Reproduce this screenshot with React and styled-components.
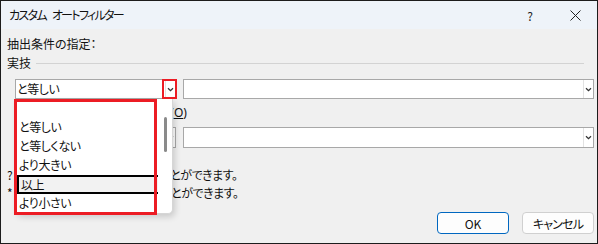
import React from "react";
import styled, { createGlobalStyle } from "styled-components";

const Global = createGlobalStyle`
  html, body { margin: 0; padding: 0; background: #ffffff; }
  body { font-family: "Noto Sans CJK JP", "Noto Sans", sans-serif; font-feature-settings: "palt"; }
`;

const Window = styled.div`
  position: relative;
  box-sizing: border-box;
  width: 598px;
  height: 244px;
  border: 1px solid #1c1c1c;
  display: flex;
  flex-direction: column;
  font-size: 12px;
  color: #111;
  overflow: hidden;
`;

const TitleBar = styled.div`
  height: 28px;
  flex: none;
  background: #eef3f9;
  display: flex;
  align-items: center;
  padding-left: 8px;
`;

const Title = styled.div`
  flex: 1;
  font-size: 12px;
  line-height: 28px;
  letter-spacing: -1.7px;
  word-spacing: 5px;
  white-space: pre;
`;

const TitleButton = styled.div`
  width: ${(p) => p.$w}px;
  height: 28px;
  display: flex;
  align-items: center;
  justify-content: center;
  font-size: 12px;
  color: #222;
`;

const Body = styled.div`
  flex: 1;
  background: #f0f0f0;
  display: flex;
  flex-direction: column;
  padding: 0 3px 0 6px;
`;

const Line = styled.div`
  line-height: 18px;
  height: 18px;
  margin-top: ${(p) => p.$mt || 0}px;
  white-space: nowrap;
  letter-spacing: ${(p) => p.$ls || 0}px;
`;

const GroupHeader = styled.div`
  display: flex;
  align-items: center;
  margin-top: 1px;
  margin-right: 10px;
  height: 18px;
  line-height: 18px;
`;

const Rule = styled.div`
  flex: 1;
  height: 1px;
  background: #d3d3d3;
  margin-left: 5px;
`;

const ComboRow = styled.div`
  display: flex;
  gap: 7px;
  margin-left: 8px;
  margin-top: ${(p) => p.$mt}px;
  height: ${(p) => p.$h}px;
`;

const Combo = styled.div`
  box-sizing: border-box;
  width: ${(p) => (p.$w ? `${p.$w}px` : "auto")};
  flex: ${(p) => (p.$w ? "none" : "1")};
  height: 100%;
  border: 1px solid #a8a8a8;
  background: #fff;
  display: flex;
  align-items: center;
`;

const ComboText = styled.div`
  flex: 1;
  padding-left: 1px;
  line-height: 16px;
  white-space: nowrap;
  letter-spacing: -0.4px;
`;

const ComboArrow = styled.div`
  width: 9px;
  height: 100%;
  border-left: 1px solid #e2e2e2;
  display: flex;
  align-items: center;
  justify-content: center;
`;

const RadioRow = styled.div`
  display: flex;
  align-items: center;
  gap: 47px;
  height: 18px;
  margin-top: 5px;
  padding-left: 25px;
`;

const Radio = styled.label`
  display: flex;
  align-items: center;
  gap: 4px;
  line-height: 18px;
  white-space: nowrap;
`;

const RadioText = styled.span`
  font-family: "Noto Sans", "Noto Sans CJK JP", sans-serif;
  font-feature-settings: normal;
`;

const Dot = styled.span`
  box-sizing: border-box;
  width: 13px;
  height: 13px;
  border-radius: 50%;
  border: 1px solid ${(p) => (p.$on ? "#0067c0" : "#555")};
  background: ${(p) => (p.$on ? "radial-gradient(circle, #fff 0 2.5px, #0067c0 3px)" : "#fff")};
`;

const U = styled.span`
  text-decoration: underline;
`;

const ButtonRow = styled.div`
  display: flex;
  justify-content: flex-end;
  gap: 13px;
  margin-top: 10px;
`;

const Button = styled.button`
  box-sizing: border-box;
  width: 72px;
  height: 22px;
  border-radius: 4px;
  border: 1px solid ${(p) => (p.$primary ? "#0067c0" : "#d0d0d0")};
  background: #fdfdfd;
  font-family: inherit;
  font-feature-settings: "palt";
  font-size: 12px;
  color: #111;
  padding: 0;
  letter-spacing: ${(p) => (p.$primary ? 0 : -0.8)}px;
`;

const Popup = styled.div`
  position: absolute;
  left: 14px;
  top: 98px;
  box-sizing: border-box;
  width: 158px;
  height: 115px;
  background: #fff;
  border: 1px solid #d6d6d6;
  border-top: none;
  border-radius: 0 0 5px 5px;
  box-shadow: 2px 3px 6px rgba(0, 0, 0, 0.16);
`;

const Item = styled.div`
  box-sizing: border-box;
  height: 19px;
  line-height: 17px;
  padding-left: 3px;
  white-space: nowrap;
  letter-spacing: -0.4px;
  ${(p) =>
    p.$hot &&
    `
    width: 141px;
    margin-left: 1px;
    padding-left: 2px;
    background: #f2f2f2;
    border: 2px solid #000;
    border-right: none;
    line-height: 15px;
  `}
`;

const Thumb = styled.div`
  position: absolute;
  left: 148px;
  top: 18px;
  width: 3px;
  height: 35px;
  border-radius: 2px;
  background: #8a8a8a;
`;

const RedBox = styled.div`
  position: absolute;
  box-sizing: border-box;
  left: ${(p) => p.$x}px;
  top: ${(p) => p.$y}px;
  width: ${(p) => p.$w}px;
  height: ${(p) => p.$h}px;
  border: ${(p) => p.$b}px solid #ec1c24;
`;

const Chevron = () => (
  <svg width="7" height="5" viewBox="0 0 7 5">
    <path d="M1 1.2 L3.5 3.6 L6 1.2" fill="none" stroke="#333" strokeWidth="1.3" />
  </svg>
);

const Close = () => (
  <svg width="11" height="11" viewBox="0 0 11 11">
    <path d="M0.5 0.5 L10.5 10.5 M10.5 0.5 L0.5 10.5" stroke="#222" strokeWidth="1" />
  </svg>
);

const items = ["", "と等しい", "と等しくない", "より大きい", "以上", "より小さい"];

export default function App() {
  return (
    <>
      <Global />
      <Window>
        <TitleBar>
          <Title>カスタム オートフィルター</Title>
          <TitleButton $w={46}>?</TitleButton>
          <TitleButton $w={44}>
            <Close />
          </TitleButton>
        </TitleBar>
        <Body>
          <Line $mt={6}>抽出条件の指定：</Line>
          <GroupHeader>
            実技
            <Rule />
          </GroupHeader>
          <ComboRow $mt={7} $h={20}>
            <Combo $w={161}>
              <ComboText>と等しい</ComboText>
              <ComboArrow>
                <Chevron />
              </ComboArrow>
            </Combo>
            <Combo>
              <ComboText />
              <ComboArrow>
                <Chevron />
              </ComboArrow>
            </Combo>
          </ComboRow>
          <RadioRow>
            <Radio>
              <Dot $on />
              <RadioText>
                AND(<U>A</U>)
              </RadioText>
            </Radio>
            <Radio>
              <Dot />
              <RadioText>
                OR(<U>O</U>)
              </RadioText>
            </Radio>
          </RadioRow>
          <ComboRow $mt={5} $h={21}>
            <Combo $w={161}>
              <ComboText />
              <ComboArrow>
                <Chevron />
              </ComboArrow>
            </Combo>
            <Combo>
              <ComboText />
              <ComboArrow>
                <Chevron />
              </ComboArrow>
            </Combo>
          </ComboRow>
          <Line $mt={18} $ls={-0.5}>? を使って、任意の 1 文字を表すことができます。</Line>
          <Line $ls={-0.5}>* を使って、任意の文字列を表すことができます。</Line>
          <ButtonRow>
            <Button $primary>OK</Button>
            <Button>キャンセル</Button>
          </ButtonRow>
        </Body>
        <Popup>
          {items.map((t, i) => (
            <Item key={i} $hot={t === "以上"}>
              {t}
            </Item>
          ))}
          <Thumb />
        </Popup>
        <RedBox $x={13} $y={98} $w={143} $h={116} $b={3} />
        <RedBox $x={161} $y={78} $w={15} $h={20} $b={2} />
      </Window>
    </>
  );
}
